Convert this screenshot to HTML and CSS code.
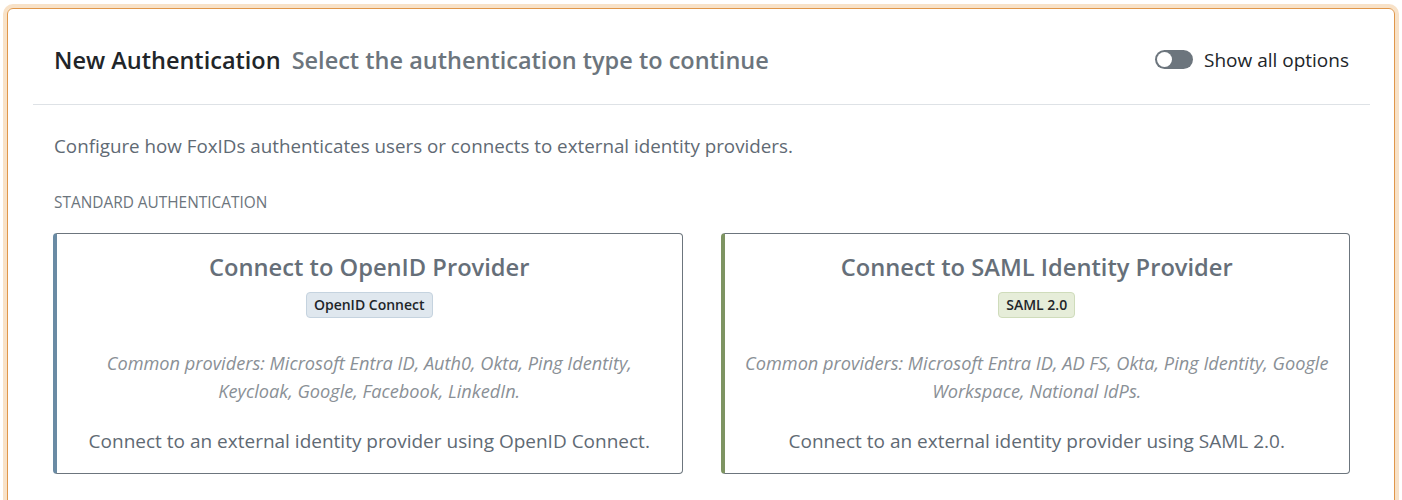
FILE: index.html
```html
<!DOCTYPE html>
<html lang="en">
<head>
    <meta charset="UTF-8">
    <title>New Authentication</title>
    <link rel="stylesheet" href="styles.css">
</head>
<body>
    <div class="panel">
        <div class="panel-header">
            <div class="heading">
                <span class="heading-title">New Authentication</span>
                <span class="heading-sub">Select the authentication type to continue</span>
            </div>
            <label class="switch">
                <span class="switch-track"><span class="switch-knob"></span></span>
                <span class="switch-label">Show all options</span>
            </label>
        </div>
        <div class="panel-body">
            <p class="intro">Configure how FoxIDs authenticates users or connects to external identity providers.</p>
            <div class="section-label">STANDARD AUTHENTICATION</div>
            <div class="options">
                <div class="option option-oidc">
                    <div class="option-title">Connect to OpenID Provider</div>
                    <span class="badge badge-oidc">OpenID Connect</span>
                    <p class="providers">Common providers: Microsoft Entra ID, Auth0, Okta, Ping Identity, Keycloak, Google, Facebook, LinkedIn.</p>
                    <p class="option-text">Connect to an external identity provider using OpenID Connect.</p>
                </div>
                <div class="option option-saml">
                    <div class="option-title">Connect to SAML Identity Provider</div>
                    <span class="badge badge-saml">SAML 2.0</span>
                    <p class="providers">Common providers: Microsoft Entra ID, AD FS, Okta, Ping Identity, Google Workspace, National IdPs.</p>
                    <p class="option-text">Connect to an external identity provider using SAML 2.0.</p>
                </div>
            </div>
        </div>
    </div>
</body>
</html>
```

FILE: styles.css
```css
body {
    margin: 0;
    padding: 8px 7px 0;
    background-color: #fff;
    font-family: "Open Sans", "Noto Sans", sans-serif;
    color: #212529;
}
.panel {
    border: 1px solid #e0974a;
    border-radius: 6px;
    box-shadow: 0 0 0 4px #f8e2c8;
    padding: 0 24px 40px 25px;
    min-height: 600px;
}
.panel-header {
    display: flex;
    align-items: center;
    justify-content: space-between;
    height: 89px;
    padding: 6px 21px 0;
    border-bottom: 1px solid #dee2e6;
}
.heading {
    display: flex;
    align-items: baseline;
    gap: 11px;
    font-size: 23.5px;
    font-weight: 600;
}
.heading-title {
    color: #212529;
}
.heading-sub {
    color: #6c757d;
}
.switch {
    display: flex;
    align-items: center;
    gap: 11px;
}
.switch-track {
    display: flex;
    align-items: center;
    width: 38px;
    height: 19px;
    box-sizing: border-box;
    padding: 2px;
    border-radius: 10px;
    background-color: #6c757d;
}
.switch-knob {
    width: 15px;
    height: 15px;
    border-radius: 50%;
    background-color: #fff;
}
.switch-label {
    font-size: 19px;
}
.panel-body {
    padding: 0 21px;
}
.intro {
    margin: 28px 0 0;
    font-size: 18.8px;
    line-height: 27px;
    color: #5f6a74;
}
.section-label {
    margin-top: 32px;
    font-size: 15.4px;
    line-height: 21px;
    color: #6c757d;
}
.options {
    display: grid;
    grid-template-columns: 1fr 1fr;
    gap: 38px;
    margin: 20px -1px 0;
}
.option {
    display: flex;
    flex-direction: column;
    align-items: center;
    border: 1px solid #6c757d;
    border-radius: 4px;
    padding: 18px 20px 18px;
    text-align: center;
}
.option-oidc {
    border-left: 4px solid #6a8ba4;
}
.option-saml {
    border-left: 4px solid #7e9462;
}
.option-title {
    font-size: 23.7px;
    font-weight: 600;
    line-height: 30px;
    color: #666f79;
}
.badge {
    margin-top: 10px;
    padding: 0 7px;
    line-height: 24px;
    font-size: 14px;
    font-weight: 600;
    color: #212529;
    border-radius: 4px;
}
.badge-oidc {
    background-color: #dfe7ee;
    border: 1px solid #c5d3df;
}
.badge-saml {
    background-color: #e6edd9;
    border: 1px solid #cfdcbb;
}
.providers {
    margin: 31px 0 0;
    font-size: 18.2px;
    font-style: italic;
    line-height: 28px;
    color: #8a9096;
}
.option-text {
    margin: 22px 0 0;
    font-size: 19px;
    line-height: 28px;
    color: #5f6a74;
}
```
